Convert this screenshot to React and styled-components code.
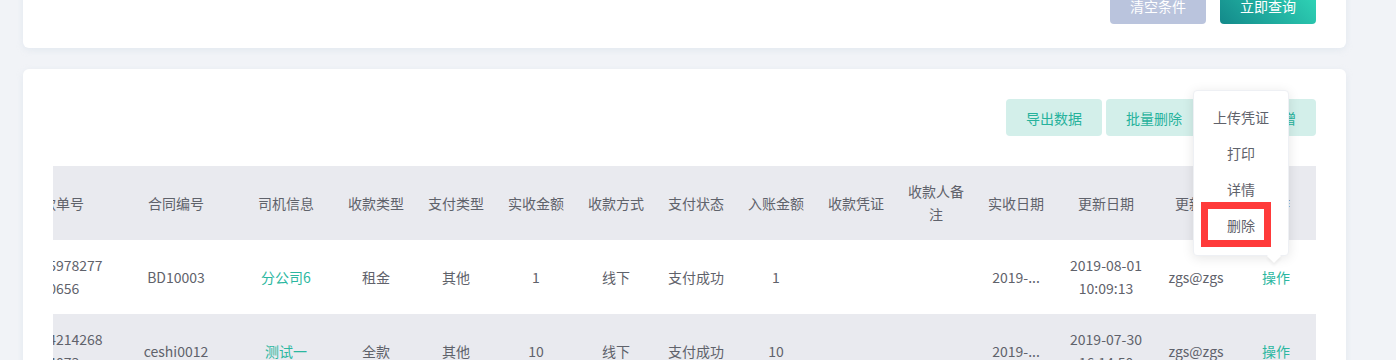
import { useEffect, useRef } from 'react';
import styled, { createGlobalStyle } from 'styled-components';

const GlobalStyle = createGlobalStyle`
  html, body {
    margin: 0;
    padding: 0;
    background: #f1f3f7;
    font-family: "Noto Sans CJK SC", "Noto Sans", sans-serif;
    font-size: 14px;
    color: #606266;
    overflow: hidden;
  }
`;

const Page = styled.main`
  margin-top: -61px;
  padding: 0 50px 0 23px;
  display: flex;
  flex-direction: column;
  gap: 21px;
`;

const Card = styled.section`
  position: relative;
  background: #fff;
  border-radius: 6px;
  box-shadow: 0 2px 6px rgba(200, 215, 225, 0.35);
  padding: ${(p) => p.$pad};
`;

const Toolbar = styled.div`
  display: flex;
  justify-content: flex-end;
  gap: ${(p) => p.$gap || 14}px;
`;

const Button = styled.button`
  width: 96px;
  height: ${(p) => (p.$light ? 37 : 36)}px;
  border: none;
  border-radius: 4px;
  font-family: inherit;
  font-size: 14px;
  cursor: pointer;
  padding: 0;
  margin-left: ${(p) => p.$offset || 0}px;
  color: ${(p) => (p.$light ? '#26b29c' : '#fff')};
  background: ${(p) =>
    p.$variant === 'primary'
      ? 'linear-gradient(45deg, #13898a 0%, #31d9b9 100%)'
      : p.$variant === 'muted'
        ? '#bac4dd'
        : '#d3efea'};
`;

const TableScroll = styled.div`
  margin-top: 30px;
  overflow: hidden;
`;

const Table = styled.table`
  table-layout: fixed;
  border-collapse: collapse;
  width: 1320px;

  th, td {
    padding: 0 10px;
    height: 74px;
    text-align: center;
    vertical-align: middle;
    line-height: 23px;
    word-break: break-all;
    font-weight: normal;
    color: #5f626b;
  }

  thead tr {
    background: #e9eaef;
  }

  tbody tr:nth-child(even) {
    background: #e9eaef;
  }
`;

const LinkText = styled.span`
  color: #2bb7a0;
  cursor: pointer;
`;

const Popover = styled.div`
  position: absolute;
  left: 1170px;
  top: 21px;
  width: 96px;
  padding: 8px 0 12px;
  background: #fff;
  border-radius: 4px;
  box-shadow: 0 2px 12px rgba(0, 0, 0, 0.1);
  border: 1px solid #eef0f4;
  box-sizing: border-box;
  z-index: 3;

  &::after {
    content: '';
    position: absolute;
    left: 75px;
    bottom: -6px;
    width: 10px;
    height: 10px;
    background: #fff;
    transform: rotate(45deg);
    box-shadow: 2px 2px 3px rgba(0, 0, 0, 0.05);
  }
`;

const MenuItem = styled.div`
  height: 36px;
  line-height: 36px;
  text-align: center;
  color: #5f626b;
  position: relative;
  z-index: 1;
`;

const Highlight = styled.div`
  position: absolute;
  left: 7px;
  top: 111px;
  width: 70px;
  height: 45px;
  border: 7px solid #ff3a3a;
  box-sizing: border-box;
  z-index: 0;
`;

const columns = [
  { title: '收款单号', width: 120 },
  { title: '合同编号', width: 120 },
  { title: '司机信息', width: 100 },
  { title: '收款类型', width: 80 },
  { title: '支付类型', width: 80 },
  { title: '实收金额', width: 80 },
  { title: '收款方式', width: 80 },
  { title: '支付状态', width: 80 },
  { title: '入账金额', width: 80 },
  { title: '收款凭证', width: 80 },
  { title: '收款人备注', width: 80 },
  { title: '实收日期', width: 80 },
  { title: '更新日期', width: 100 },
  { title: '更新人', width: 80 },
  { title: '操作', width: 80 },
];

const rows = [
  {
    no: '156465978277190656',
    contract: 'BD10003',
    driver: '分公司6',
    type: '租金',
    payType: '其他',
    amount: '1',
    method: '线下',
    status: '支付成功',
    entry: '1',
    date: '2019-...',
    updated: ['2019-08-01', '10:09:13'],
    user: 'zgs@zgs',
  },
  {
    no: '156464214268194073',
    contract: 'ceshi0012',
    driver: '测试一',
    type: '全款',
    payType: '其他',
    amount: '10',
    method: '线下',
    status: '支付成功',
    entry: '10',
    date: '2019-...',
    updated: ['2019-07-30', '16:14:50'],
    user: 'zgs@zgs',
  },
];

const App = () => {
  const scrollRef = useRef(null);

  useEffect(() => {
    // 表格横向滚动位置
    if (scrollRef.current) scrollRef.current.scrollLeft = 57;
  }, []);

  return (
    <>
      <GlobalStyle />
      <Page>
        <Card $pad="49px 30px 24px">
          <Toolbar>
            <Button $variant="muted">清空条件</Button>
            <Button $variant="primary">立即查询</Button>
          </Toolbar>
        </Card>

        <Card $pad="30px 30px 40px">
          <Toolbar $gap={4}>
            <Button $light>导出数据</Button>
            <Button $light>批量删除</Button>
            <Button $light $offset={14}>批量新增</Button>
          </Toolbar>

          <TableScroll ref={scrollRef}>
            <Table>
              <colgroup>
                {columns.map((c) => (
                  <col key={c.title} style={{ width: c.width }} />
                ))}
              </colgroup>
              <thead>
                <tr>
                  {columns.map((c) => (
                    <th key={c.title}>{c.title}</th>
                  ))}
                </tr>
              </thead>
              <tbody>
                {rows.map((r) => (
                  <tr key={r.no}>
                    <td>{r.no}</td>
                    <td>{r.contract}</td>
                    <td><LinkText>{r.driver}</LinkText></td>
                    <td>{r.type}</td>
                    <td>{r.payType}</td>
                    <td>{r.amount}</td>
                    <td>{r.method}</td>
                    <td>{r.status}</td>
                    <td>{r.entry}</td>
                    <td></td>
                    <td></td>
                    <td>{r.date}</td>
                    <td>{r.updated[0]}<br />{r.updated[1]}</td>
                    <td>{r.user}</td>
                    <td><LinkText>操作</LinkText></td>
                  </tr>
                ))}
              </tbody>
            </Table>
          </TableScroll>

          <Popover>
            <MenuItem>上传凭证</MenuItem>
            <MenuItem>打印</MenuItem>
            <MenuItem>详情</MenuItem>
            <MenuItem>删除</MenuItem>
            <Highlight />
          </Popover>
        </Card>
      </Page>
    </>
  );
};

export default App;
